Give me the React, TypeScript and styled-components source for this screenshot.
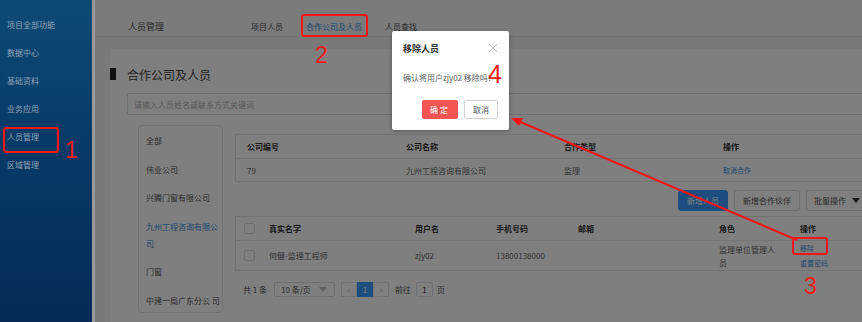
import React from 'react';
import styled, { createGlobalStyle } from 'styled-components';

const GlobalStyle = createGlobalStyle`
    html, body {
        margin: 0;
        padding: 0;
        overflow: hidden;
        background: #fff;
        font-family: "Noto Sans CJK SC", "Noto Sans", "Liberation Sans", sans-serif;
    }
`;

const Screen = styled.div`
    position: relative;
    display: flex;
    width: 862px;
    height: 322px;
    overflow: hidden;
`;

const Sidebar = styled.nav`
    width: 92px;
    flex-shrink: 0;
    background: linear-gradient(180deg, #0e4a75 0%, #073764 55%, #052b56 100%);
    border-right: 3px solid #9a9a9a;
    padding-top: 17px;
    box-sizing: content-box;
`;

const NavItem = styled.div`
    height: 28px;
    line-height: 16px;
    padding-left: 7px;
    font-size: 8px;
    color: #8ea3b8;
`;

const Main = styled.main`
    position: relative;
    flex: 1;
    display: flex;
    flex-direction: column;
    background: #f2f2f2;
    overflow: hidden;
`;

const TopBar = styled.header`
    height: 37px;
    flex-shrink: 0;
    display: flex;
    align-items: center;
    padding: 12px 0 0 33px;
    box-sizing: border-box;
    background: #f7f7f7;
    border-top: 4px solid #f2f2f2;
    border-bottom: 1px solid #e6e6e6;
`;

const PageName = styled.span`
    font-size: 9px;
    color: #555;
    width: 123px;
`;

const Tab = styled.span<{ active?: boolean }>`
    font-size: 8px;
    color: ${({ active }) => (active ? '#3f8fdc' : '#555')};
    margin-right: 23px;
`;

const Content = styled.div`
    flex: 1;
    padding: 12px 0 0 15px;
`;

const Card = styled.section`
    background: #fff;
    height: 100%;
    padding-top: 19px;
    box-sizing: border-box;
    width: 800px;
`;

const TitleRow = styled.div`
    display: flex;
    align-items: center;
    gap: 11px;
    height: 12px;
`;

const TitleMark = styled.span`
    width: 6px;
    height: 12px;
    background: #222;
`;

const Title = styled.h2`
    margin: 0;
    font-size: 12px;
    font-weight: 400;
    color: #444;
`;

const Search = styled.div`
    margin: 13px 0 0 17px;
    height: 20px;
    border: 1px solid #dcdfe6;
    border-radius: 2px;
    display: flex;
    align-items: center;
    padding-left: 6px;
    font-size: 8px;
    color: #b0b3b8;
`;

const Body = styled.div`
    display: flex;
    gap: 12px;
    margin: 10px 0 0 28px;
`;

const CompanyList = styled.ul`
    list-style: none;
    margin: 0;
    padding: 6px 0 0 7px;
    width: 85px;
    height: 188px;
    box-sizing: border-box;
    border: 1px solid #e4e4e4;
    border-radius: 4px;
`;

const CompanyItem = styled.li<{ active?: boolean }>`
    font-size: 8px;
    line-height: 17px;
    color: ${({ active }) => (active ? '#3f8fdc' : '#555')};
    margin-bottom: 11.5px;
    word-break: break-all;
`;

const RightPane = styled.div`
    padding-top: 9px;
    display: flex;
    flex-direction: column;
    width: 640px;
`;

const Table = styled.div<{ cols: string }>`
    display: grid;
    grid-template-columns: ${({ cols }) => cols};
    border: 1px solid #e6e6e6;
    border-right: none;
`;

const HeadCell = styled.div<{ h: number; pad?: number }>`
    height: ${({ h }) => h}px;
    display: flex;
    align-items: center;
    padding-left: ${({ pad }) => pad ?? 8}px;
    font-size: 8px;
    font-weight: 700;
    color: #333;
    border-bottom: 1px solid #e6e6e6;
`;

const Cell = styled.div<{ h: number; pad?: number }>`
    height: ${({ h }) => h}px;
    display: flex;
    flex-direction: column;
    justify-content: center;
    padding-left: ${({ pad }) => pad ?? 8}px;
    font-size: 8px;
    line-height: 13px;
    color: #666;
`;

const LinkText = styled.span`
    font-size: 7px;
    line-height: 15px;
    color: #3f8fdc;
`;

const ButtonRow = styled.div`
    display: flex;
    gap: 6px;
    margin: 8px 0 5px 443px;
`;

const Button = styled.button<{ primary?: boolean; w: number }>`
    width: ${({ w }) => w}px;
    height: 21px;
    padding: 0;
    font-family: inherit;
    font-size: 8px;
    border-radius: 3px;
    border: 1px solid ${({ primary }) => (primary ? '#3b9dff' : '#dcdfe6')};
    background: ${({ primary }) => (primary ? '#3b9dff' : '#fff')};
    color: ${({ primary }) => (primary ? '#fff' : '#555')};
    display: flex;
    align-items: center;
    justify-content: center;
    gap: 6px;
    & + & {
        margin-left: 0;
    }
`;

const Check = styled.span`
    width: 9px;
    height: 9px;
    border: 1px solid #dcdfe6;
    border-radius: 2px;
    background: #fff;
`;

const Pager = styled.div`
    display: flex;
    align-items: center;
    margin: 11px 0 0 8px;
    font-size: 8px;
    color: #555;
`;

const PageSize = styled.div`
    width: 61px;
    height: 15px;
    margin: 0 6px 0 7px;
    border: 1px solid #dcdfe6;
    border-radius: 2px;
    display: flex;
    align-items: center;
    justify-content: space-between;
    padding: 0 7px 0 6px;
    box-sizing: border-box;
    color: #555;
`;

const PageBox = styled.div<{ current?: boolean }>`
    width: 16px;
    height: 15px;
    box-sizing: border-box;
    display: flex;
    align-items: center;
    justify-content: center;
    border: 1px solid ${({ current }) => (current ? '#3b9dff' : '#e4e4e4')};
    background: ${({ current }) => (current ? '#3b9dff' : '#fff')};
    color: ${({ current }) => (current ? '#fff' : '#c0c4cc')};
    font-size: 8px;
`;

const JumpInput = styled.div`
    width: 17px;
    height: 15px;
    box-sizing: border-box;
    border: 1px solid #dcdfe6;
    border-radius: 2px;
    display: flex;
    align-items: center;
    justify-content: center;
    margin: 0 4px 0 5px;
    color: #333;
`;

const Overlay = styled.div`
    position: absolute;
    inset: 0;
    background: rgba(0, 0, 0, 0.5);
`;

const Dialog = styled.div`
    position: absolute;
    left: 297px;
    top: 31px;
    width: 117px;
    height: 99px;
    background: #fff;
    border-radius: 2px;
    box-shadow: 0 1px 4px rgba(0, 0, 0, 0.3);
    box-sizing: border-box;
    padding: 10px 11px 0 11px;
`;

const DialogHead = styled.div`
    display: flex;
    justify-content: space-between;
    align-items: center;
    height: 14px;
`;

const DialogTitle = styled.span`
    font-size: 9px;
    font-weight: 700;
    color: #303133;
`;

const DialogText = styled.p`
    margin: 17px 0 0;
    font-size: 8px;
    color: #606266;
    white-space: nowrap;
`;

const DialogFooter = styled.div`
    display: flex;
    justify-content: flex-end;
    gap: 6px;
    margin: 17px 0 0;
    padding-right: 0;
`;

const DialogBtn = styled.button<{ danger?: boolean; w: number }>`
    width: ${({ w }) => w}px;
    height: 19px;
    padding: 0;
    font-family: inherit;
    font-size: 8px;
    border-radius: 2px;
    border: 1px solid ${({ danger }) => (danger ? '#f45454' : '#d2d4d8')};
    background: ${({ danger }) => (danger ? '#f45454' : '#fff')};
    color: ${({ danger }) => (danger ? '#fff' : '#555')};
    letter-spacing: ${({ danger }) => (danger ? '2px' : '0')};
`;

const Marker = styled.div<{ x: number; y: number; w: number; h: number }>`
    position: absolute;
    left: ${({ x }) => x}px;
    top: ${({ y }) => y}px;
    width: ${({ w }) => w}px;
    height: ${({ h }) => h}px;
    border: 2px solid #f31414;
    border-radius: 3px;
    box-sizing: border-box;
`;

const Num = styled.span<{ x: number; y: number; size?: number }>`
    position: absolute;
    left: ${({ x }) => x}px;
    top: ${({ y }) => y}px;
    font-family: "Liberation Sans", Arial, sans-serif;
    font-size: ${({ size }) => size ?? 23}px;
    line-height: 1;
    color: #f31a1a;
`;

const Arrow = styled.svg`
    position: absolute;
    inset: 0;
    pointer-events: none;
`;

const navItems = ['项目全部功能', '数据中心', '基础资料', '业务应用', '人员管理', '区域管理'];
const companies = ['全部', '伟业公司', '兴腾门窗有限公司', '九州工程咨询有限公司', '门窗', '中建一局广东分公 司'];

const CloseIcon: React.FC = () => (
    <svg width="10" height="10" viewBox="0 0 10 10">
        <path d="M1 1 L9 9 M9 1 L1 9" stroke="#b5bcc6" strokeWidth="1" fill="none" />
    </svg>
);

const Caret: React.FC<{ color: string }> = ({ color }) => (
    <svg width="8" height="5" viewBox="0 0 8 5">
        <path d="M0 0 H8 L4 5 Z" fill={color} />
    </svg>
);

export default function App() {
    return (
        <>
            <GlobalStyle />
            <Screen>
                <Sidebar>
                    {navItems.map((item) => (
                        <NavItem key={item}>{item}</NavItem>
                    ))}
                </Sidebar>
                <Main>
                    <TopBar>
                        <PageName>人员管理</PageName>
                        <Tab>项目人员</Tab>
                        <Tab active>合作公司及人员</Tab>
                        <Tab>人员查找</Tab>
                    </TopBar>
                    <Content>
                        <Card>
                            <TitleRow>
                                <TitleMark />
                                <Title>合作公司及人员</Title>
                            </TitleRow>
                            <Search>请输入人员姓名或联系方式关键词</Search>
                            <Body>
                                <CompanyList>
                                    {companies.map((c) => (
                                        <CompanyItem key={c} active={c === '九州工程咨询有限公司'}>
                                            {c}
                                        </CompanyItem>
                                    ))}
                                </CompanyList>
                                <RightPane>
                                    <Table cols="159px 158px 159px 164px">
                                        <HeadCell h={23} pad={11}>公司编号</HeadCell>
                                        <HeadCell h={23} pad={11}>公司名称</HeadCell>
                                        <HeadCell h={23} pad={11}>合作类型</HeadCell>
                                        <HeadCell h={23} pad={11}>操作</HeadCell>
                                        <Cell h={22} pad={11}>79</Cell>
                                        <Cell h={22} pad={11}>九州工程咨询有限公司</Cell>
                                        <Cell h={22} pad={11}>监理</Cell>
                                        <Cell h={22} pad={11}><LinkText>取消合作</LinkText></Cell>
                                    </Table>
                                    <ButtonRow>
                                        <Button primary w={50}>新增人员</Button>
                                        <Button w={66}>新增合作伙伴</Button>
                                        <Button w={62}>批量操作 <Caret color="#333" /></Button>
                                    </ButtonRow>
                                    <Table cols="25px 146px 81px 82px 141px 81px 84px">
                                        <HeadCell h={23}><Check /></HeadCell>
                                        <HeadCell h={23}>真实名字</HeadCell>
                                        <HeadCell h={23}>用户名</HeadCell>
                                        <HeadCell h={23}>手机号码</HeadCell>
                                        <HeadCell h={23}>邮箱</HeadCell>
                                        <HeadCell h={23}>角色</HeadCell>
                                        <HeadCell h={23}>操作</HeadCell>
                                        <Cell h={29}><Check /></Cell>
                                        <Cell h={29}>何健-监理工程师</Cell>
                                        <Cell h={29}>zjy02</Cell>
                                        <Cell h={29}>13800138000</Cell>
                                        <Cell h={29}></Cell>
                                        <Cell h={29}>
                                            <span>监理单位管理人</span>
                                            <span>员</span>
                                        </Cell>
                                        <Cell h={29}>
                                            <LinkText>移除</LinkText>
                                            <LinkText>重置密码</LinkText>
                                        </Cell>
                                    </Table>
                                    <Pager>
                                        共 1 条
                                        <PageSize>
                                            10 条/页 <Caret color="#c0c4cc" />
                                        </PageSize>
                                        <PageBox>‹</PageBox>
                                        <PageBox current>1</PageBox>
                                        <PageBox>›</PageBox>
                                        <span style={{ marginLeft: 6 }}>前往</span>
                                        <JumpInput>1</JumpInput>
                                        页
                                    </Pager>
                                </RightPane>
                            </Body>
                        </Card>
                    </Content>
                    <Overlay />
                    <Dialog>
                        <DialogHead>
                            <DialogTitle>移除人员</DialogTitle>
                            <CloseIcon />
                        </DialogHead>
                        <DialogText>确认将用户zjy02 移除吗?</DialogText>
                        <DialogFooter>
                            <DialogBtn danger w={36}>确定</DialogBtn>
                            <DialogBtn w={34}>取消</DialogBtn>
                        </DialogFooter>
                    </Dialog>
                </Main>

                <Marker x={3} y={127} w={56} h={26} />
                <Num x={65} y={139}>1</Num>
                <Marker x={301} y={14} w={67} h={23} />
                <Num x={315} y={44}>2</Num>
                <Marker x={792} y={237} w={36} h={18} />
                <Num x={804} y={275}>3</Num>
                <Num x={488} y={62} size={25}>4</Num>
                <Arrow width="862" height="322" viewBox="0 0 862 322">
                    <line x1="797" y1="240" x2="518" y2="121" stroke="#f31414" strokeWidth="2" />
                    <polygon points="511,118 523,118 519,126" fill="#f31414" />
                </Arrow>
            </Screen>
        </>
    );
}
